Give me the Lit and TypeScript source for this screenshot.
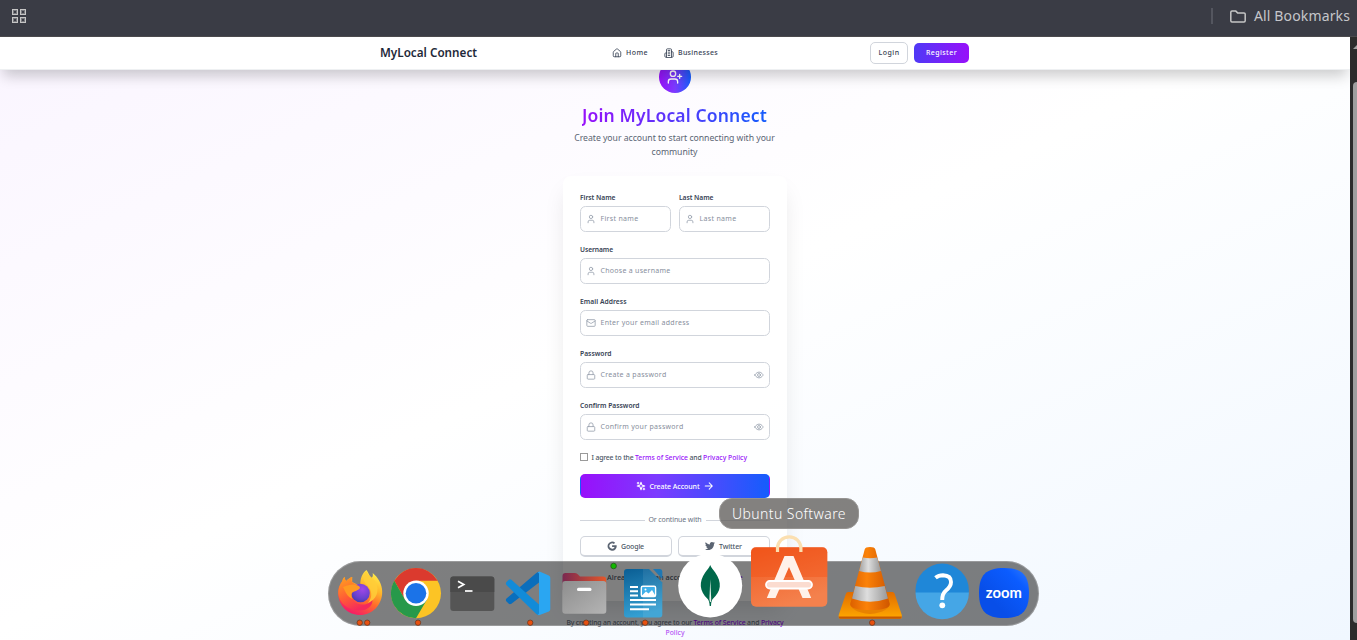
import { LitElement, html, css, svg, TemplateResult } from "lit";
import { customElement, property } from "lit/decorators.js";

/** Inline text that is tracked to a fixed advance width. */
const t = (text: string, width: number, cls = "") =>
  html`<span class="t ${cls}" data-w=${width}>${text}</span>`;

const icons: Record<string, TemplateResult> = {
  home: svg`<path d="M15 21v-8a1 1 0 0 0-1-1h-4a1 1 0 0 0-1 1v8"/><path d="M3 10a2 2 0 0 1 .7-1.5l7-6a2 2 0 0 1 2.6 0l7 6A2 2 0 0 1 21 10v9a2 2 0 0 1-2 2H5a2 2 0 0 1-2-2z"/>`,
  building: svg`<path d="M6 22V4a2 2 0 0 1 2-2h8a2 2 0 0 1 2 2v18Z"/><path d="M6 12H4a2 2 0 0 0-2 2v6a2 2 0 0 0 2 2h2"/><path d="M18 9h2a2 2 0 0 1 2 2v9a2 2 0 0 1-2 2h-2"/><path d="M10 6h4M10 10h4M10 14h4M10 18h4"/>`,
  userPlus: svg`<path d="M16 21v-2a4 4 0 0 0-4-4H6a4 4 0 0 0-4 4v2"/><circle cx="9" cy="7" r="4"/><path d="M19 8v6M22 11h-6"/>`,
  user: svg`<path d="M19 21v-2a4 4 0 0 0-4-4H9a4 4 0 0 0-4 4v2"/><circle cx="12" cy="7" r="4"/>`,
  mail: svg`<rect width="20" height="16" x="2" y="4" rx="2"/><path d="m22 7-8.97 5.7a1.94 1.94 0 0 1-2.06 0L2 7"/>`,
  lock: svg`<rect width="18" height="11" x="3" y="11" rx="2"/><path d="M7 11V7a5 5 0 0 1 10 0v4"/>`,
  eye: svg`<path d="M2 12s3.500-7 10-7 10 7 10 7-3.500 7-10 7-10-7-10-7Z"/><circle cx="12" cy="12" r="3.500"/>`,
  sparkles: svg`<path d="m12 3-1.900 5.800a2 2 0 0 1-1.300 1.300L3 12l5.800 1.900a2 2 0 0 1 1.300 1.300L12 21l1.900-5.800a2 2 0 0 1 1.300-1.300L21 12l-5.800-1.900a2 2 0 0 1-1.300-1.300Z"/><path d="M5 3v4M19 17v4M3 5h4M17 19h4"/>`,
  arrow: svg`<path d="M3 12h17M12.500 4.500l7.500 7.500-7.500 7.500"/>`,
};

@customElement("line-icon")
export class LineIcon extends LitElement {
  @property() name = "user";
  static styles = css`
    :host { display: block; flex: none; width: 10px; height: 10px; }
    .g { display: block; width: 100%; height: 100%; fill: none; stroke: currentColor; stroke-width: 2; stroke-linecap: round; stroke-linejoin: round; }
    .sparkles, .arrow { stroke-width: 2.500; }
  `;
  render() {
    return html`<svg class="g ${this.name}" viewBox="0 0 24 24">${icons[this.name]}</svg>`;
  }
}

interface DockApp {
  width: number;
  dots: number[];
  art: TemplateResult;
}

const apps: DockApp[] = [
  {
    width: 56,
    dots: [359.7, 367.2],
    art: svg`
      <defs>
        <linearGradient id="ff1" x1=".8" y1="0" x2=".3" y2="1"><stop offset="0" stop-color="#fff44f"/><stop offset=".35" stop-color="#ffb52a"/><stop offset=".62" stop-color="#ff6a2b"/><stop offset="1" stop-color="#f5156c"/></linearGradient>
        <linearGradient id="ff2" x1="0" y1="0" x2=".5" y2="1"><stop offset="0" stop-color="#ffa51e"/><stop offset=".6" stop-color="#ff5a36"/><stop offset="1" stop-color="#f42a5c"/></linearGradient>
        <radialGradient id="ff3" cx=".6" cy=".3" r=".8"><stop offset="0" stop-color="#a047e8"/><stop offset=".6" stop-color="#6a41cf"/><stop offset="1" stop-color="#3c3aa8"/></radialGradient>
      </defs>
      <path fill="url(#ff1)" d="M366.500 570c2 3 2.500 5 5 8 1.500-1 1.500-3 1.200-5 5 4 9.500 11 9.500 19 0 13-10 23-22 23s-22-9-22-22c0-6 2-9 4-12 .5-2 1-3 2.500-4 0 2 .5 3 1.500 4 2-2 4-3.500 6-4v5l8 4c0-8 2-12.500 6.300-16Z"/>
      <path fill="url(#ff2)" d="M338.300 594c0-6 2-10 4-12.500.5-2 1-3.500 2.500-4.500 0 2 .5 3 1.500 4 2-2 4-3.500 6-4-1 2-1 4 0 5.500l7 4c-1 3-5 4-8 6 0 8 5 12 11 12 5 0 8-2 10-5 1 6-5 11-12 11-12 0-21-7-22-16.500Z"/>
      <circle cx="360.500" cy="593" r="9.300" fill="url(#ff3)"/>
      <path fill="#ff9a22" d="M343 587c5-2 9-3 13-2 3 .5 4 2 4 3-2 3-6 3-8 5-1 2-.5 4 .5 6-5-2-7-7-9.500-12Z"/>
      <path fill="#ffce38" opacity=".85" d="M366 571c-4 5-3 10 1 14 5 5 6 12 1 18 8-3 12-12 8-20-2-5-8-7-10-12Z"/>`,
  },
  {
    width: 56,
    dots: [418],
    art: svg`
      <circle cx="416" cy="593.200" r="25" fill="#fcc425"/>
      <path fill="#db3a2e" d="M394.300 580.700A25 25 0 0 1 437.700 580.700L416 580.700 405 599.500Z"/>
      <path fill="#27994a" d="M394.300 580.700A25 25 0 0 0 416 618.200L427 599.500 405 599.500Z"/>
      <circle cx="416" cy="593.200" r="12.700" fill="#fff"/>
      <circle cx="416" cy="593.200" r="10.300" fill="#1b73e8"/>`,
  },
  {
    width: 56,
    dots: [],
    art: svg`
      <rect x="450.300" y="576.500" width="44" height="34.500" rx="3" fill="#555"/>
      <path d="M450.300 592V579.500q0-3 3-3H491.300q3 0 3 3V592Z" fill="#4a4a4a"/>
      <path d="M458 581.200l5.800 3.300-5.800 3.300" fill="none" stroke="#fff" stroke-width="1.700"/>
      <path d="M465 591h7.500" stroke="#fff" stroke-width="1.700"/>`,
  },
  {
    width: 56,
    dots: [530.2],
    art: svg`
      <path fill="#0a6ebc" d="M506.500 598.500q-1.300 1.500 0 3l2.300 2.300q1.200.8 2.600-.1L539 582.500V571.800q-1.600.1-3 1.400Z"/>
      <path fill="#128bd8" d="M506.500 585q-1.300-1.500 0-3l2.300-2.300q1.200-.8 2.600.1L539 604.500V615.200q-1.600-.1-3-1.400Z"/>
      <path fill="#2aa6f2" d="M539 615.300q-.8-.2-1.500-1.200.9.400 1.500-.7V573.500q-.6-1-1.500-.6.800-1.200 2-1.400l9.300 4q1.500.8 1.500 2.500V609q0 1.700-1.500 2.500Z"/>`,
  },
  {
    width: 56,
    dots: [586.2],
    art: svg`
      <defs>
        <linearGradient id="fi1"><stop offset="0" stop-color="#7a2850"/><stop offset="1" stop-color="#e4572a"/></linearGradient>
        <linearGradient id="fi2" x2="1" y2="1"><stop offset="0" stop-color="#8e8e8e"/><stop offset="1" stop-color="#b4b4b4"/></linearGradient>
      </defs>
      <path fill="url(#fi1)" d="M562.500 590V576q0-3 3-3H575q2 0 3 1.500l2 2H603q3.200 0 3.200 3V590Z"/>
      <rect x="562.300" y="581" width="44" height="32.800" rx="3" fill="url(#fi2)"/>
      <rect x="577" y="587.800" width="14.500" height="3.200" rx="1.500" fill="#fff"/>`,
  },
  {
    width: 62,
    dots: [645.1],
    art: svg`
      <defs><linearGradient id="wr" x2=".2" y2="1"><stop offset="0" stop-color="#0a5e94"/><stop offset="1" stop-color="#349fd2"/></linearGradient></defs>
      <path fill="url(#wr)" d="M624 572q0-3 3-3H649L662.300 582.500V614.500q0 3-3 3H627q-3 0-3-3Z"/>
      <path fill="#fff" opacity=".08" d="M643 569h6l13.300 13.500v32q0 3-3 3H643Z"/>
      <path fill="#1f78b4" d="M653 569h7q2.300 0 2.300 2.500V579Z"/>
      <path stroke="#fff" stroke-width="1.900" d="M630 587h8M630 591.200h8M630 595.500h8M630 600h26M630 604.500h26M630 609.200h19"/>
      <rect x="641.300" y="586.300" width="14.300" height="10.300" rx="1.500" fill="#40b0ea" stroke="#fff" stroke-width="1.400"/>
      <path fill="#fff" d="M642 595.500l4-4 2.500 2 3.500-3.500 3.300 5.500v1H642Z"/><circle cx="645.500" cy="589.500" r="1" fill="#fff"/>`,
  },
  {
    width: 72,
    dots: [],
    art: svg`
      <circle cx="710.200" cy="585.500" r="32" fill="#fff"/>
      <path fill="#00684a" d="M710.200 565c1 3 3 4.500 5 7.500 7 10 6 19-2.500 26.500-1 1-1.500 3-1.700 7h-1.300c-.3-4-1-6-2-7-8.500-8-9-17-2.500-26.500 2-3 4-4.500 5-7.500Z"/>
      <path fill="#e6f0ea" d="M710.300 579l.9 20-.3 3h-1l-.5-3Z"/>`,
  },
  {
    width: 86,
    dots: [],
    art: svg`
      <defs><linearGradient id="so" x2=".4" y2="1"><stop offset="0" stop-color="#f1581e"/><stop offset="1" stop-color="#f4814d"/></linearGradient></defs>
      <rect x="751" y="547.300" width="76.300" height="59.500" rx="5" fill="url(#so)"/>
      <path d="M751 577V552.300q0-5 5-5H822.300q5 0 5 5V577Z" fill="#f04c10" opacity=".35"/>
      <path d="M777.500 552V548a11.700 11.200 0 0 1 23.400 0V552" fill="none" stroke="#fbdfb0" stroke-width="3.200"/>
      <path fill="#fff2ea" d="M784.500 556h9L811.200 598H802.500L789 567 775.500 598H766.800Z"/>
      <rect x="766" y="581" width="46" height="7.500" rx="3.700" fill="#fbdcd0" stroke="#fff" stroke-width="1.800"/>`,
  },
  {
    width: 76,
    dots: [872.2],
    art: svg`
      <defs>
        <linearGradient id="vl1" x2="0" y2="1"><stop offset="0" stop-color="#e06c00"/><stop offset="1" stop-color="#ffa800"/></linearGradient>
        <linearGradient id="vl2"><stop offset="0" stop-color="#dc6000"/><stop offset=".42" stop-color="#fb8208"/><stop offset="1" stop-color="#cf5600"/></linearGradient>
        <linearGradient id="vl3"><stop offset="0" stop-color="#a0a0a0"/><stop offset=".42" stop-color="#dedede"/><stop offset="1" stop-color="#989898"/></linearGradient>
      </defs>
      <path fill="url(#vl1)" d="M846 593.500q.5-1.500 2-1.500H892.500q1.500 0 2 1.500L901.800 615v2q0 1.500-1.500 1.500H840.200q-1.500 0-1.500-1.500v-2Z"/>
      <path fill="#c85a00" d="M838.700 616.500H901.800q0 2.200-1.500 2.200H840.200q-1.500 0-1.500-2.200Z"/>
      <path fill="#e88200" d="M850 602q0 10 20 12 20-2 20-12Z"/>
      <path fill="url(#vl2)" d="M864.800 549q.6-2 5.200-2t5.200 2L889.800 604q0 6-19.800 6t-19.800-6Z"/>
      <path fill="url(#vl3)" d="M862.700 557.500q7.300 1.500 14.600 0L880.900 571q-10.900 3-21.800 0Z"/>
      <path fill="url(#vl3)" d="M855.300 586q14.700 3.500 29.400 0L888 598.500q-18 6.500-36 0Z"/>`,
  },
  {
    width: 68,
    dots: [],
    art: svg`
      <circle cx="942.200" cy="590.300" r="26.700" fill="#1f87d8"/>
      <path fill="#45a6e6" d="M915.500 592.500h53.400a26.700 26.700 0 0 1-53.400 0Z"/>
      <path d="M935.500 577.800Q938.500 575.300 943 575.300 951 575.600 951 582 951 586.500 946 590.500 942.200 593.500 942.200 600" fill="none" stroke="#fff" stroke-width="3.900"/>
      <circle cx="942.300" cy="605.300" r="2.900" fill="#fff"/>`,
  },
  {
    width: 56,
    dots: [],
    art: svg`
      <defs><linearGradient id="zo" x1="1" y1="0" x2=".3" y2=".7"><stop offset="0" stop-color="#2f7cff"/><stop offset=".35" stop-color="#0b5cff"/><stop offset="1" stop-color="#084ee8"/></linearGradient></defs>
      <path fill="url(#zo)" d="M979 593C979 575 986 568 1004 568S1029 575 1029 593 1022 618 1004 618 979 611 979 593Z"/>
      <text class="zoom" x="1003.800" y="597.800" text-anchor="middle" textLength="36" lengthAdjust="spacingAndGlyphs">zoom</text>`,
  },
];

@customElement("app-dock")
export class AppDock extends LitElement {
  static styles = css`
    :host { display: block; }
    .dock { box-sizing: border-box; width: 711px; height: 65px; padding-left: 4px; display: flex; background: rgba(0, 0, 0, .5); border-radius: 33px; box-shadow: inset 0 0 0 1px rgba(255, 255, 255, .22); }
    .app { flex: none; display: block; height: 65px; overflow: visible; }
    .dot { fill: #e8500f; stroke: #63351f; stroke-width: .7; }
    .badge { fill: #12b800; stroke: #1f5a18; stroke-width: .8; }
    .zoom { font: 700 16px Lato, "Noto Sans", sans-serif; fill: #fff; }
  `;
  render() {
    let x = 332;
    return html`<div class="dock">
      ${apps.map((a, i) => {
        const left = x;
        x += a.width;
        return html`<svg class="app" width=${a.width} viewBox="${left} 561 ${a.width} 65">
          ${a.art}
          ${a.dots.map((d) => svg`<circle class="dot" cx=${d} cy="622.700" r="2.700"/>`)}
          ${i === 4 ? svg`<circle class="badge" cx="613.600" cy="566" r="2.800"/>` : ""}
        </svg>`;
      })}
    </div>`;
  }
}

@customElement("app-root")
export class AppRoot extends LitElement {
  static styles = css`
    :host { display: block; position: relative; width: 1357px; height: 640px; overflow: hidden; font: 500 7px "Noto Sans", sans-serif; color: #4a5565; }
    * { box-sizing: border-box; }
    .t { display: inline-block; white-space: pre; flex: none; justify-self: start; }
    .chrome { height: 37px; background: #3a3c45; border-bottom: 1px solid #4b4a4d; display: flex; align-items: center; padding: 0 7px 4px 12px; color: #c5c6ca; }
    .grid { display: grid; grid-template-columns: 6px 6px; gap: 2px; margin-right: auto; }
    .cell { height: 6px; border: 1.500px solid #c5c5c5; background: #3a3c45; box-shadow: inset 0 0 0 1px #77787d; }
    .bar { width: 2px; height: 16px; background: #54565f; margin-right: 17px; }
    .folder { width: 16px; height: 13px; margin-right: 8px; fill: none; stroke: #c5c5c5; stroke-width: 1.500; }
    .bm { font-size: 14px; font-weight: 400; line-height: 20px; }
    .view { display: flex; height: 603px; }
    .page { width: 1350px; height: 603px; display: flex; flex-direction: column; align-items: center; overflow: hidden; background: linear-gradient(155deg, #faf5ff 0%, #fff 48%, #f0f7ff 100%); }
    .scroll { width: 7px; background: #2c2c2c; padding: 7px 0 0 3px; overflow: hidden; display: flex; flex-direction: column; align-items: flex-start; }
    .up { width: 10px; height: 5px; background: #a0a0a0; clip-path: polygon(50% 0, 100% 100%, 0 100%); }
    .thumb { width: 8px; height: 541px; margin-top: 33px; border-radius: 4px; background: #9f9f9f; }
    .header { flex: none; z-index: 1; width: 1350px; height: 33px; background: #fff; border-bottom: 1px solid #eef0f2; box-shadow: 0 9px 14px -3px rgba(0, 0, 0, .2); display: flex; justify-content: center; }
    .bar-in { width: 589px; margin-right: 1px; display: grid; grid-template-columns: 232px 1fr auto; align-items: center; height: 31px; }
    .brand { font-size: 11.700px; font-weight: 600; color: #1e2939; line-height: 16px; padding-bottom: 2px; }
    .nav { display: flex; gap: 16px; }
    .link { display: flex; align-items: center; gap: 4px; line-height: 10px; color: #364153; }
    .acts { display: flex; align-items: center; gap: 6px; color: #364153; }
    .login { width: 38px; height: 22px; border: 1px solid #d1d5dc; border-radius: 5px; display: flex; align-items: center; justify-content: center; }
    .reg { width: 55px; height: 20px; border-radius: 5px; background: linear-gradient(90deg, #4f39f6, #9810fa); color: #fff; display: flex; align-items: center; justify-content: center; }
    .hero { flex: none; display: flex; flex-direction: column; align-items: center; height: 106px; margin-top: -9px; }
    .avatar { width: 32px; height: 32px; border-radius: 50%; background: linear-gradient(90deg, #9810fa, #7c3aff 50%, #155dfc); color: #fff; display: flex; align-items: center; justify-content: center; }
    .avatar line-icon { width: 16px; height: 16px; }
    .h1 { font-size: 17.500px; font-weight: 600; line-height: 24px; margin: 10px 1px 4px 0; background: linear-gradient(90deg, #9810fa, #155dfc); background-clip: text; -webkit-background-clip: text; color: transparent; }
    .sub { font-size: 8.700px; font-weight: 400; line-height: 14px; margin-right: 1px; color: #5a6473; }
    .card { flex: none; width: 224px; height: 425px; margin-top: 9px; padding: 17px 17px 0; border-radius: 8px; background: rgba(255, 255, 255, .8); box-shadow: 0 12px 25px -6px rgba(0, 0, 0, .13); }
    .names { display: grid; grid-template-columns: 1fr 1fr; gap: 8px; }
    .field { height: 52px; }
    .label { height: 13px; line-height: 9px; font-size: 6.700px; font-weight: 600; color: #364153; }
    .box { height: 26px; border: 1px solid #d1d5dc; border-radius: 5.500px; background: rgba(255, 255, 255, .5); display: flex; align-items: center; padding: 0 5px; gap: 4px; color: #99a1af; }
    .ph { color: #878e9c; font-weight: 400; line-height: 10px; margin-left: .500px; }
    .end { margin-left: auto; }
    .agree { display: flex; align-items: center; height: 10px; margin-top: -1px; line-height: 10px; font-size: 6.800px; gap: 1.500px; }
    .agree .t { margin-top: 1px; }
    .check { width: 8px; height: 8px; border: 1px solid #9a9a9a; background: #fff; margin-right: 2px; }
    .link2 { color: #9810fa; }
    .cta { height: 24px; margin-top: 12px; padding-right: 1px; border: 1px solid transparent; border-radius: 5px; background: linear-gradient(90deg, #9810fa, #7c3aff 40%, #155dfc); color: #fff; display: flex; align-items: center; justify-content: center; gap: 4px; }
    .or { display: flex; align-items: center; gap: 4px; height: 10px; margin-top: 17px; color: #6a7282; font-weight: 400; line-height: 10px; }
    .rule { flex: 1; height: 1px; background: #d1d5dc; }
    .social { display: grid; grid-template-columns: 1fr 1fr; gap: 6px; margin-top: 11px; }
    .sb { height: 21px; border: 1px solid #d1d5dc; border-bottom-width: 2px; border-radius: 5px; display: flex; align-items: center; justify-content: center; gap: 4px; padding-right: 1px; background: rgba(255, 255, 255, .6); }
    .brandmark { width: 10px; height: 10px; fill: #5b6472; }
    .have { display: flex; justify-content: center; gap: 2px; font-size: 7.200px; line-height: 10px; margin-top: 15px; color: #4a5565; }
    .terms { flex: none; margin-top: 17px; display: flex; flex-wrap: wrap; width: 218px; justify-content: center; gap: 0 1.500px; line-height: 10px; font-size: 6.800px; color: #6a7282; }
    .pale { color: #b455f5; }
    .tip { position: absolute; left: 719px; top: 498px; width: 140px; height: 31px; border-radius: 13px; border: 1px solid #969492; background: rgba(92, 89, 87, .76); display: flex; align-items: center; justify-content: center; color: #fff; font-size: 14px; font-weight: 300; line-height: 20px; }
    .dock { position: absolute; left: 328px; top: 561px; }
  `;

  firstUpdated() {
    this.renderRoot.querySelectorAll<HTMLElement>("[data-w]").forEach((el) => {
      const target = Number(el.dataset.w);
      const spacing = (target - el.getBoundingClientRect().width) / (el.textContent ?? " ").length;
      el.style.letterSpacing = `${spacing}px`;
    });
  }

  private field(label: string, lw: number, ph: string, pw: number, icon: string) {
    return html`<div class="field">
      <div class="label">${t(label, lw)}</div>
      <div class="box">
        <line-icon name=${icon}></line-icon>${t(ph, pw, "ph")}
        ${icon === "lock" ? html`<line-icon class="end" name="eye"></line-icon>` : ""}
      </div>
    </div>`;
  }

  render() {
    return html`
      <div class="chrome">
        <div class="grid">${[0, 1, 2, 3].map(() => html`<span class="cell"></span>`)}</div>
        <span class="bar"></span>
        <svg class="folder" viewBox="0 0 16 13"><path d="M.8 2.300q0-1.200 1.200-1.200h3.800l1.800 1.800h6.400q1.200 0 1.200 1.200v6.700q0 1.200-1.200 1.200H2q-1.200 0-1.200-1.200Z"/></svg>
        ${t("All Bookmarks", 96, "bm")}
      </div>
      <div class="view">
        <main class="page">
          <header class="header">
            <div class="bar-in">
              ${t("MyLocal Connect", 97, "brand")}
              <nav class="nav">
                <span class="link"><line-icon name="home"></line-icon>${t("Home", 22)}</span>
                <span class="link"><line-icon name="building"></line-icon>${t("Businesses", 40)}</span>
              </nav>
              <div class="acts">
                <span class="login">${t("Login", 21)}</span><span class="reg">${t("Register", 31)}</span>
              </div>
            </div>
          </header>
          <section class="hero">
            <div class="avatar"><line-icon name="userPlus"></line-icon></div>
            ${t("Join MyLocal Connect", 185, "h1")}
            ${t("Create your account to start connecting with your", 200.5, "sub")}
            ${t("community", 46, "sub")}
          </section>
          <section class="card">
            <div class="names">
              ${this.field("First Name", 35.5, "First name", 38, "user")}
              ${this.field("Last Name", 34.5, "Last name", 37, "user")}
            </div>
            ${this.field("Username", 33, "Choose a username", 70, "user")}
            ${this.field("Email Address", 46.5, "Enter your email address", 89, "mail")}
            ${this.field("Password", 31.5, "Create a password", 66, "lock")}
            ${this.field("Confirm Password", 59.5, "Confirm your password", 83, "lock")}
            <div class="agree">
              <span class="check"></span>${t("I agree to the", 42)}${t("Terms of Service", 53, "link2")}${t("and", 12)}${t("Privacy Policy", 44, "link2")}
            </div>
            <div class="cta"><line-icon name="sparkles"></line-icon>${t("Create Account", 50)}<line-icon name="arrow"></line-icon></div>
            <div class="or"><span class="rule"></span>${t("Or continue with", 53)}<span class="rule"></span></div>
            <div class="social">
              <div class="sb">
                <svg class="brandmark" viewBox="0 0 24 24"><path d="M12.200 10v4.200h5.900c-.8 2.600-2.600 4.300-5.900 4.300a6.500 6.500 0 1 1 4.200-11.400l3.100-3A10.900 10.900 0 1 0 23 10Z"/></svg>${t("Google", 23)}
              </div>
              <div class="sb">
                <svg class="brandmark" viewBox="0 0 24 24"><path d="M23.950 4.570a10 10 0 0 1-2.820.77 4.960 4.960 0 0 0 2.160-2.720c-.95.550-2 .950-3.130 1.180a4.920 4.920 0 0 0-8.380 4.480C7.690 8.100 4.070 6.130 1.640 3.160a4.920 4.920 0 0 0 1.520 6.570 4.900 4.900 0 0 1-2.230-.61v.06a4.920 4.920 0 0 0 3.950 4.830 5 5 0 0 1-2.210.08 4.940 4.940 0 0 0 4.600 3.420A9.870 9.870 0 0 1 0 19.540a13.990 13.990 0 0 0 7.550 2.210c9.050 0 14-7.500 14-13.980v-.64a9.940 9.940 0 0 0 2.400-2.560Z"/></svg>${t("Twitter", 23)}
              </div>
            </div>
            <div class="have">${t("Already have an account?", 90)}${t("Sign in here", 44, "link2")}</div>
          </section>
          <div class="terms">
            ${t("By creating an account, you agree to our", 125.5)}${t("Terms of Service", 52, "link2")}${t("and", 12.5)}${t("Privacy", 22.5, "link2")}${t("Policy", 19, "link2 pale")}
          </div>
        </main>
        <div class="scroll"><span class="up"></span><span class="thumb"></span></div>
      </div>
      <div class="tip">${t("Ubuntu Software", 114)}</div>
      <app-dock class="dock"></app-dock>
    `;
  }
}
